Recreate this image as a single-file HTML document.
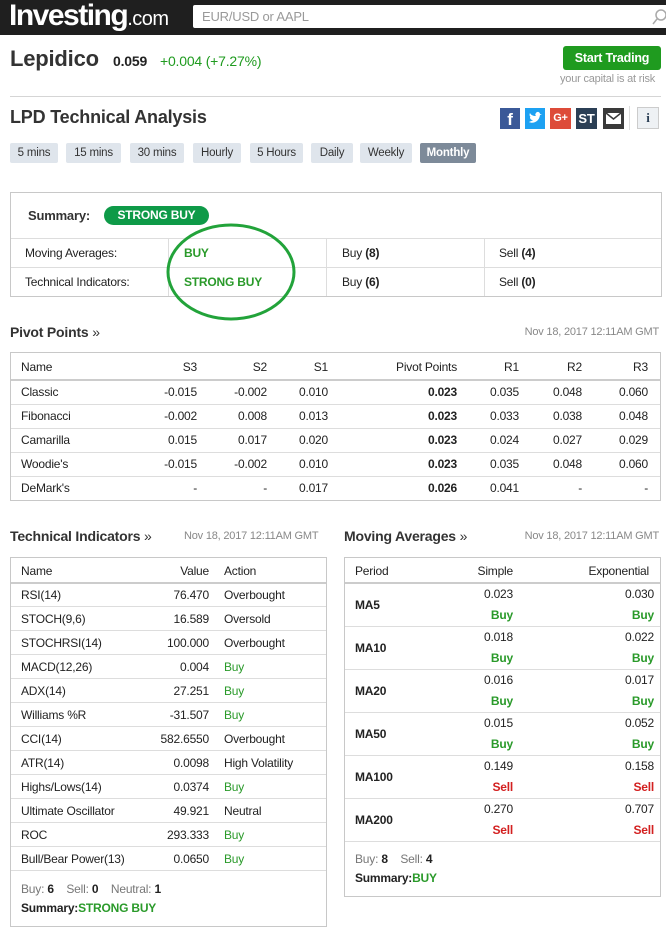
<!DOCTYPE html>
<html><head><meta charset="utf-8">
<style>
*{margin:0;padding:0;box-sizing:border-box}
body{width:666px;height:920px;overflow:hidden;background:#fff;font-family:"Liberation Sans",Arial,sans-serif;font-size:12px;color:#222;position:relative;letter-spacing:-0.2px}
.a{position:absolute;white-space:nowrap}
.g{color:#2a9a2a}.r{color:#d32020}.b{font-weight:bold}
.hl{position:absolute;height:1px;background:#ddd}
.box{position:absolute;border:1px solid #c8c8c8}
.btn{position:absolute;top:143px;height:20px;background:#dfe5ec;color:#333;font-size:11.5px;line-height:20px;text-align:center;border-radius:2px}
.rt{text-align:right}
</style></head><body>
<div class="a" style="left:0;top:0;width:666px;height:35px;background:#1f1f1f"></div>
<div class="a" style="left:9px;top:-1px;color:#fff;font-size:30px;font-weight:bold;letter-spacing:-1.5px">Investing<span style="font-size:20px;font-weight:normal;letter-spacing:-0.5px">.com</span></div>
<div class="a" style="left:193px;top:5px;width:480px;height:23px;background:#fff;border-radius:2px"></div>
<div class="a" style="left:202px;top:9px;color:#999;font-size:13px">EUR/USD or AAPL</div>
<svg class="a" style="left:652px;top:8px" width="14" height="18"><circle cx="9" cy="7" r="5" fill="none" stroke="#aaa" stroke-width="1.5"/><path d="M5 11l-4 5" stroke="#aaa" stroke-width="1.5"/></svg>
<div class="a" style="left:10px;top:46px;font-size:22px;font-weight:bold;color:#333">Lepidico</div>
<div class="a" style="left:113px;top:53px;font-size:14px;color:#222;font-weight:bold;font-weight:600">0.059</div>
<div class="a" style="left:160px;top:53px;font-size:14px;color:#1f9b1f">+0.004 (+7.27%)</div>
<div class="a" style="left:563px;top:46px;width:98px;height:24px;background:#1f9b1f;border-radius:3px;color:#fff;font-weight:bold;font-size:12.5px;line-height:24px;text-align:center">Start Trading</div>
<div class="a" style="left:560px;top:73px;font-size:11px;color:#999">your capital is at risk</div>
<div class="hl" style="left:10px;top:96px;width:651px;background:#d5d5d5"></div>
<div class="a" style="left:10px;top:107px;font-size:18px;font-weight:bold;color:#333">LPD Technical Analysis</div>
<div class="a" style="left:500px;top:108px;width:20px;height:21px;background:#3b5998;color:#fff;font-weight:bold;font-size:17px;text-align:center;line-height:24px">f</div>
<div class="a" style="left:525px;top:108px;width:20px;height:21px;background:#1da1f2"><svg width="20" height="21" viewBox="0 0 20 21"><path d="M4 14c4 2 10 0 11-7l2-1-2 0c0-2-3-3-4-1-1 1-1 2 0 3-3 0-5-1-6-3-1 2 0 4 1 4l-1 0c0 2 1 3 3 3-1 1-2 1-4 2z" fill="#fff"/></svg></div>
<div class="a" style="left:550px;top:108px;width:21px;height:21px;background:#dd4b39;color:#fff;font-weight:bold;font-size:11px;text-align:center;line-height:21px">G+</div>
<div class="a" style="left:576px;top:108px;width:21px;height:21px;background:#2b3f55;color:#fff;font-weight:bold;font-size:13px;text-align:center;line-height:21px">ST</div>
<div class="a" style="left:603px;top:108px;width:21px;height:21px;background:#3a3a3a"><svg width="21" height="21"><rect x="3" y="5" width="15" height="11" fill="#fff"/><path d="M3 5l7.5 6L18 5" stroke="#3a3a3a" stroke-width="1.5" fill="none"/></svg></div>
<div class="a" style="left:629px;top:106px;width:1px;height:24px;background:#ddd"></div>
<div class="a" style="left:637px;top:107px;width:22px;height:22px;background:#eef1f4;border:1px solid #ccc;color:#2b3f55;font-weight:bold;font-family:'Liberation Serif',serif;font-size:13px;text-align:center;line-height:20px">i</div>
<div class="btn" style="left:10px;width:48px">5 mins</div>
<div class="btn" style="left:66px;width:55px">15 mins</div>
<div class="btn" style="left:130px;width:54px">30 mins</div>
<div class="btn" style="left:193px;width:48px">Hourly</div>
<div class="btn" style="left:250px;width:53px">5 Hours</div>
<div class="btn" style="left:311px;width:42px">Daily</div>
<div class="btn" style="left:360px;width:52px">Weekly</div>
<div class="btn" style="left:420px;width:56px;background:#7d8a99;color:#fff;font-weight:bold">Monthly</div>
<div class="box" style="left:10px;top:192px;width:652px;height:105px"></div>
<div class="a b" style="left:28px;top:208px;font-size:13px;color:#333">Summary:</div>
<div class="a" style="left:104px;top:206px;width:105px;height:19px;background:#0e9a48;border-radius:10px;color:#fff;font-weight:bold;text-align:center;line-height:19px">STRONG BUY</div>
<div class="hl" style="left:11px;top:238px;width:650px"></div>
<div class="hl" style="left:11px;top:267px;width:650px"></div>
<div class="a" style="left:168px;top:238px;width:1px;height:58px;background:#ddd"></div>
<div class="a" style="left:326px;top:238px;width:1px;height:58px;background:#ddd"></div>
<div class="a" style="left:484px;top:238px;width:1px;height:58px;background:#ddd"></div>
<div class="a" style="left:25px;top:246px">Moving Averages:</div>
<div class="a g b" style="left:184px;top:246px">BUY</div>
<div class="a" style="left:342px;top:246px">Buy <b>(8)</b></div>
<div class="a" style="left:499px;top:246px">Sell <b>(4)</b></div>
<div class="a" style="left:25px;top:275px">Technical Indicators:</div>
<div class="a g b" style="left:184px;top:275px">STRONG BUY</div>
<div class="a" style="left:342px;top:275px">Buy <b>(6)</b></div>
<div class="a" style="left:499px;top:275px">Sell <b>(0)</b></div>
<svg class="a" style="left:160px;top:220px" width="145" height="105"><ellipse cx="71" cy="52" rx="63" ry="47" fill="none" stroke="#22a33a" stroke-width="3"/></svg>
<div class="a b" style="left:10px;top:324px;font-size:14px;color:#333">Pivot Points <span style="font-weight:normal">»</span></div>
<div class="a" style="right:7px;top:326px;font-size:11px;color:#888">Nov 18, 2017 12:11AM GMT</div>
<div class="box" style="left:10px;top:352px;width:651px;height:149px"></div>
<div class="a" style="left:11px;top:379px;width:649px;height:2px;background:#ccc"></div>
<div class="hl" style="left:11px;top:404px;width:649px"></div>
<div class="hl" style="left:11px;top:428px;width:649px"></div>
<div class="hl" style="left:11px;top:452px;width:649px"></div>
<div class="hl" style="left:11px;top:476px;width:649px"></div>
<div class="a b" style="left:10px;top:528px;font-size:14px;color:#333">Technical Indicators <span style="font-weight:normal">»</span></div>
<div class="a" style="left:184px;top:530px;font-size:11px;color:#888">Nov 18, 2017 12:11AM GMT</div>
<div class="box" style="left:10px;top:557px;width:317px;height:370px"></div>
<div class="a" style="left:11px;top:582px;width:315px;height:2px;background:#ccc"></div>
<div class="a" style="left:21px;top:882px;color:#777">Buy: <b style="color:#222">6</b>&nbsp;&nbsp;&nbsp; Sell: <b style="color:#222">0</b>&nbsp;&nbsp;&nbsp; Neutral: <b style="color:#222">1</b></div>
<div class="a b" style="left:21px;top:901px">Summary:<span class="g">STRONG BUY</span></div>
<div class="a b" style="left:344px;top:528px;font-size:14px;color:#333">Moving Averages <span style="font-weight:normal">»</span></div>
<div class="a" style="right:7px;top:530px;font-size:11px;color:#888">Nov 18, 2017 12:11AM GMT</div>
<div class="box" style="left:344px;top:557px;width:317px;height:340px"></div>
<div class="a" style="left:345px;top:582px;width:315px;height:2px;background:#ccc"></div>
<div class="a" style="left:355px;top:852px;color:#777">Buy: <b style="color:#222">8</b>&nbsp;&nbsp;&nbsp; Sell: <b style="color:#222">4</b></div>
<div class="a b" style="left:355px;top:871px">Summary:<span class="g">BUY</span></div>

<div class="a" style="left:21px;top:360px">Name</div>
<div class="a rt" style="right:469px;top:360px">S3</div>
<div class="a rt" style="right:399px;top:360px">S2</div>
<div class="a rt" style="right:338px;top:360px">S1</div>
<div class="a rt" style="right:209px;top:360px">Pivot Points</div>
<div class="a rt" style="right:147px;top:360px">R1</div>
<div class="a rt" style="right:84px;top:360px">R2</div>
<div class="a rt" style="right:18px;top:360px">R3</div>
<div class="a" style="left:21px;top:385px">Classic</div><div class="a" style="right:469px;top:385px">-0.015</div><div class="a" style="right:399px;top:385px">-0.002</div><div class="a" style="right:338px;top:385px">0.010</div><div class="a b" style="right:209px;top:385px">0.023</div><div class="a" style="right:147px;top:385px">0.035</div><div class="a" style="right:84px;top:385px">0.048</div><div class="a" style="right:18px;top:385px">0.060</div>
<div class="a" style="left:21px;top:409px">Fibonacci</div><div class="a" style="right:469px;top:409px">-0.002</div><div class="a" style="right:399px;top:409px">0.008</div><div class="a" style="right:338px;top:409px">0.013</div><div class="a b" style="right:209px;top:409px">0.023</div><div class="a" style="right:147px;top:409px">0.033</div><div class="a" style="right:84px;top:409px">0.038</div><div class="a" style="right:18px;top:409px">0.048</div>
<div class="a" style="left:21px;top:433px">Camarilla</div><div class="a" style="right:469px;top:433px">0.015</div><div class="a" style="right:399px;top:433px">0.017</div><div class="a" style="right:338px;top:433px">0.020</div><div class="a b" style="right:209px;top:433px">0.023</div><div class="a" style="right:147px;top:433px">0.024</div><div class="a" style="right:84px;top:433px">0.027</div><div class="a" style="right:18px;top:433px">0.029</div>
<div class="a" style="left:21px;top:457px">Woodie's</div><div class="a" style="right:469px;top:457px">-0.015</div><div class="a" style="right:399px;top:457px">-0.002</div><div class="a" style="right:338px;top:457px">0.010</div><div class="a b" style="right:209px;top:457px">0.023</div><div class="a" style="right:147px;top:457px">0.035</div><div class="a" style="right:84px;top:457px">0.048</div><div class="a" style="right:18px;top:457px">0.060</div>
<div class="a" style="left:21px;top:481px">DeMark's</div><div class="a" style="right:469px;top:481px">-</div><div class="a" style="right:399px;top:481px">-</div><div class="a" style="right:338px;top:481px">0.017</div><div class="a b" style="right:209px;top:481px">0.026</div><div class="a" style="right:147px;top:481px">0.041</div><div class="a" style="right:84px;top:481px">-</div><div class="a" style="right:18px;top:481px">-</div>

<div class="a" style="left:21px;top:564px">Name</div><div class="a" style="right:457px;top:564px">Value</div><div class="a" style="left:224px;top:564px">Action</div>
<div style="position:absolute;left:11px;top:583px;width:315px">
<div style="height:24px;border-bottom:1px solid #ddd;position:relative;line-height:24px"><span class="a" style="left:10px">RSI(14)</span><span class="a" style="right:117px">76.470</span><span class="a" style="left:213px">Overbought</span></div>
<div style="height:24px;border-bottom:1px solid #ddd;position:relative;line-height:24px"><span class="a" style="left:10px">STOCH(9,6)</span><span class="a" style="right:117px">16.589</span><span class="a" style="left:213px">Oversold</span></div>
<div style="height:24px;border-bottom:1px solid #ddd;position:relative;line-height:24px"><span class="a" style="left:10px">STOCHRSI(14)</span><span class="a" style="right:117px">100.000</span><span class="a" style="left:213px">Overbought</span></div>
<div style="height:24px;border-bottom:1px solid #ddd;position:relative;line-height:24px"><span class="a" style="left:10px">MACD(12,26)</span><span class="a" style="right:117px">0.004</span><span class="a g" style="left:213px">Buy</span></div>
<div style="height:24px;border-bottom:1px solid #ddd;position:relative;line-height:24px"><span class="a" style="left:10px">ADX(14)</span><span class="a" style="right:117px">27.251</span><span class="a g" style="left:213px">Buy</span></div>
<div style="height:24px;border-bottom:1px solid #ddd;position:relative;line-height:24px"><span class="a" style="left:10px">Williams %R</span><span class="a" style="right:117px">-31.507</span><span class="a g" style="left:213px">Buy</span></div>
<div style="height:24px;border-bottom:1px solid #ddd;position:relative;line-height:24px"><span class="a" style="left:10px">CCI(14)</span><span class="a" style="right:117px">582.6550</span><span class="a" style="left:213px">Overbought</span></div>
<div style="height:24px;border-bottom:1px solid #ddd;position:relative;line-height:24px"><span class="a" style="left:10px">ATR(14)</span><span class="a" style="right:117px">0.0098</span><span class="a" style="left:213px">High Volatility</span></div>
<div style="height:24px;border-bottom:1px solid #ddd;position:relative;line-height:24px"><span class="a" style="left:10px">Highs/Lows(14)</span><span class="a" style="right:117px">0.0374</span><span class="a g" style="left:213px">Buy</span></div>
<div style="height:24px;border-bottom:1px solid #ddd;position:relative;line-height:24px"><span class="a" style="left:10px">Ultimate Oscillator</span><span class="a" style="right:117px">49.921</span><span class="a" style="left:213px">Neutral</span></div>
<div style="height:24px;border-bottom:1px solid #ddd;position:relative;line-height:24px"><span class="a" style="left:10px">ROC</span><span class="a" style="right:117px">293.333</span><span class="a g" style="left:213px">Buy</span></div>
<div style="height:24px;border-bottom:1px solid #ddd;position:relative;line-height:24px"><span class="a" style="left:10px">Bull/Bear Power(13)</span><span class="a" style="right:117px">0.0650</span><span class="a g" style="left:213px">Buy</span></div>
</div>

<div class="a" style="left:355px;top:564px">Period</div><div class="a" style="right:153px;top:564px">Simple</div><div class="a" style="right:17px;top:564px">Exponential</div>
<div style="position:absolute;left:345px;top:584px;width:315px">
<div style="height:43px;border-bottom:1px solid #ddd;position:relative"><span class="a b" style="left:10px;top:14px">MA5</span><span class="a" style="right:147px;top:3px">0.023</span><span class="a g b" style="right:147px;top:24px">Buy</span><span class="a" style="right:6px;top:3px">0.030</span><span class="a g b" style="right:6px;top:24px">Buy</span></div>
<div style="height:43px;border-bottom:1px solid #ddd;position:relative"><span class="a b" style="left:10px;top:14px">MA10</span><span class="a" style="right:147px;top:3px">0.018</span><span class="a g b" style="right:147px;top:24px">Buy</span><span class="a" style="right:6px;top:3px">0.022</span><span class="a g b" style="right:6px;top:24px">Buy</span></div>
<div style="height:43px;border-bottom:1px solid #ddd;position:relative"><span class="a b" style="left:10px;top:14px">MA20</span><span class="a" style="right:147px;top:3px">0.016</span><span class="a g b" style="right:147px;top:24px">Buy</span><span class="a" style="right:6px;top:3px">0.017</span><span class="a g b" style="right:6px;top:24px">Buy</span></div>
<div style="height:43px;border-bottom:1px solid #ddd;position:relative"><span class="a b" style="left:10px;top:14px">MA50</span><span class="a" style="right:147px;top:3px">0.015</span><span class="a g b" style="right:147px;top:24px">Buy</span><span class="a" style="right:6px;top:3px">0.052</span><span class="a g b" style="right:6px;top:24px">Buy</span></div>
<div style="height:43px;border-bottom:1px solid #ddd;position:relative"><span class="a b" style="left:10px;top:14px">MA100</span><span class="a" style="right:147px;top:3px">0.149</span><span class="a r b" style="right:147px;top:24px">Sell</span><span class="a" style="right:6px;top:3px">0.158</span><span class="a r b" style="right:6px;top:24px">Sell</span></div>
<div style="height:43px;border-bottom:1px solid #ddd;position:relative"><span class="a b" style="left:10px;top:14px">MA200</span><span class="a" style="right:147px;top:3px">0.270</span><span class="a r b" style="right:147px;top:24px">Sell</span><span class="a" style="right:6px;top:3px">0.707</span><span class="a r b" style="right:6px;top:24px">Sell</span></div>
</div>
</body></html>
